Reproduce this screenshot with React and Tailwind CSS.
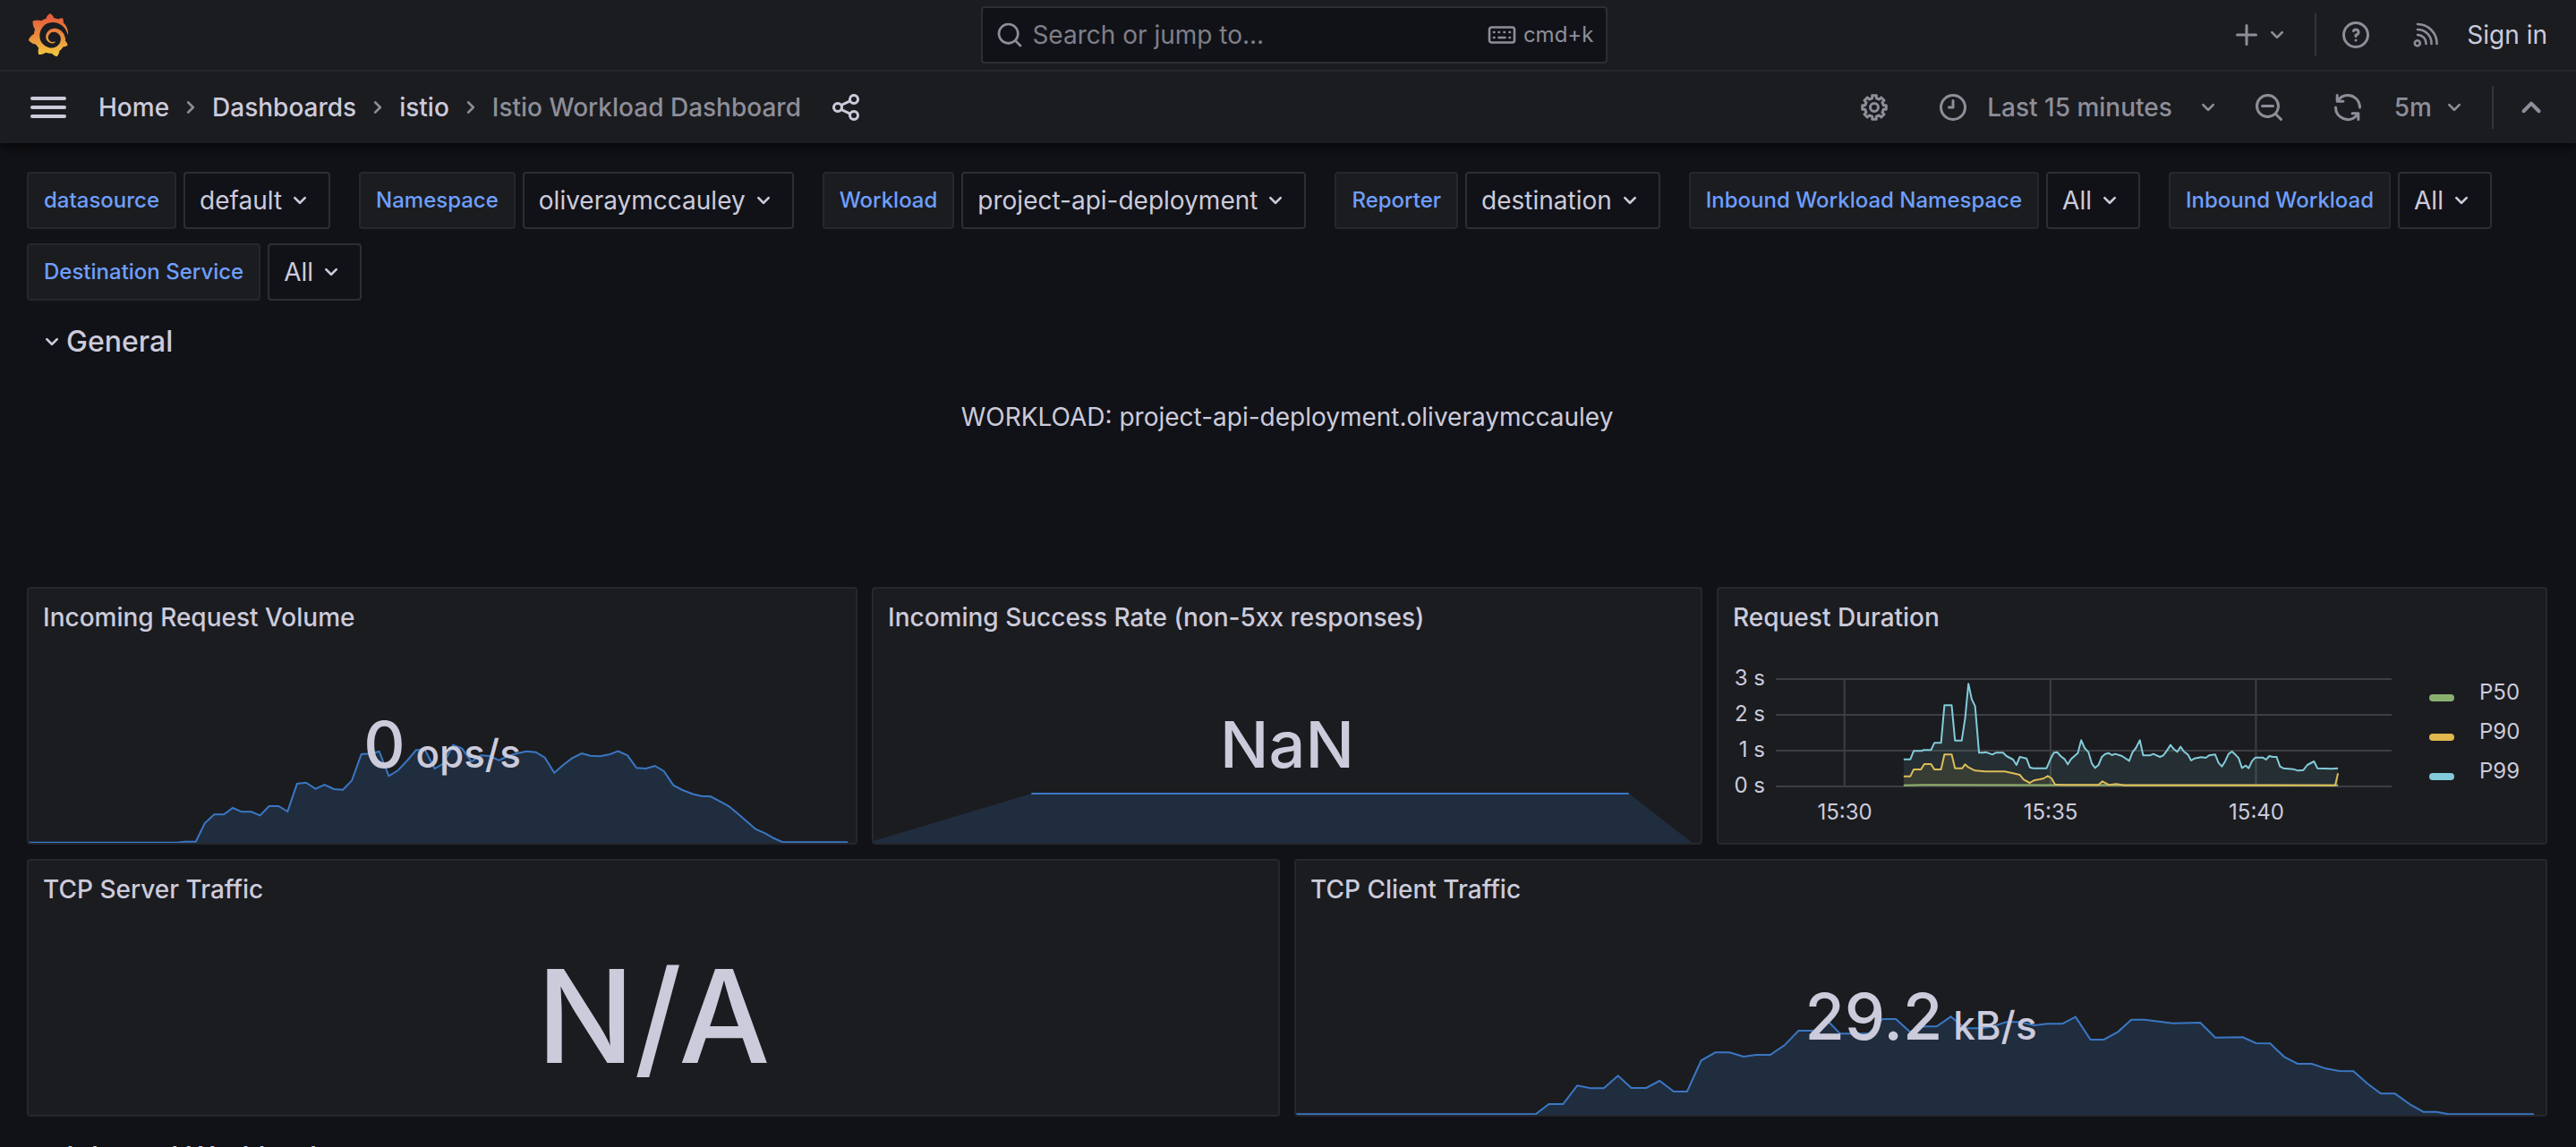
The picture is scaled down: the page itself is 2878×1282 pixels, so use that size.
import { SiGrafana } from "react-icons/si";

const ICONS = {
  plus: "M19,11H13V5a1,1,0,0,0-2,0v6H5a1,1,0,0,0,0,2h6v6a1,1,0,0,0,2,0V13h6a1,1,0,0,0,0-2Z",
  angleDown:
    "M17,9.17a1,1,0,0,0-1.41,0L12,12.71,8.46,9.17a1,1,0,0,0-1.41,0,1,1,0,0,0,0,1.42l4.24,4.24a1,1,0,0,0,1.42,0L17,10.59A1,1,0,0,0,17,9.17Z",
  angleUp:
    "M17,13.41,12.71,9.17a1,1,0,0,0-1.42,0L7.05,13.41a1,1,0,0,0,0,1.42,1,1,0,0,0,1.41,0L12,11.29l3.54,3.54a1,1,0,0,0,.7.29,1,1,0,0,0,.71-.29A1,1,0,0,0,17,13.41Z",
  angleRight:
    "M14.83,11.29,10.59,7.05a1,1,0,0,0-1.42,0,1,1,0,0,0,0,1.41L12.71,12,9.17,15.54a1,1,0,0,0,0,1.41,1,1,0,0,0,.71.29,1,1,0,0,0,.71-.29l4.24-4.24A1,1,0,0,0,14.83,11.29Z",
  search:
    "M21.71,20.29,18,16.61A9,9,0,1,0,16.61,18l3.68,3.68a1,1,0,0,0,1.42,0A1,1,0,0,0,21.71,20.29ZM11,18a7,7,0,1,1,7-7A7,7,0,0,1,11,18Z",
  searchMinus:
    "M21.71,20.29,18,16.61A9,9,0,1,0,16.61,18l3.68,3.68a1,1,0,0,0,1.42,0A1,1,0,0,0,21.71,20.29ZM11,18a7,7,0,1,1,7-7A7,7,0,0,1,11,18ZM15,10H7a1,1,0,0,0,0,2h8a1,1,0,0,0,0-2Z",
  question:
    "M11.29,15.29a1.58,1.58,0,0,0-.12.15.76.76,0,0,0-.09.18.64.64,0,0,0-.06.18,1.36,1.36,0,0,0,0,.2.84.84,0,0,0,.08.38.9.9,0,0,0,.54.54.94.94,0,0,0,.76,0,.9.9,0,0,0,.54-.54A1,1,0,0,0,13,16a1,1,0,0,0-.29-.71A1,1,0,0,0,11.29,15.29ZM12,2A10,10,0,1,0,22,12,10,10,0,0,0,12,2Zm0,18a8,8,0,1,1,8-8A8,8,0,0,1,12,20ZM12,7A3,3,0,0,0,9.4,8.5a1,1,0,1,0,1.73,1A1,1,0,0,1,12,9a1,1,0,0,1,0,2,1,1,0,0,0-1,1v1a1,1,0,0,0,2,0v-.18A3,3,0,0,0,12,7Z",
  clock:
    "M12,2A10,10,0,1,0,22,12,10,10,0,0,0,12,2Zm0,18a8,8,0,1,1,8-8A8,8,0,0,1,12,20ZM12,6a1,1,0,0,0-1,1v4H9a1,1,0,0,0,0,2h3a1,1,0,0,0,1-1V7A1,1,0,0,0,12,6Z",
  sync: "M19.91,15.51H15.38a1,1,0,0,0,0,2h2.4A8,8,0,0,1,4,12a1,1,0,0,0-2,0,10,10,0,0,0,16.88,7.23V21a1,1,0,0,0,2,0V16.5A1,1,0,0,0,19.91,15.51ZM12,2A10,10,0,0,0,5.12,4.77V3a1,1,0,0,0-2,0V7.5a1,1,0,0,0,1,1h4.5a1,1,0,0,0,0-2H6.22A8,8,0,0,1,20,12a1,1,0,0,0,2,0A10,10,0,0,0,12,2Z",
  share:
    "M18,14a4,4,0,0,0-3.08,1.48l-5.1-2.35a3.64,3.64,0,0,0,0-2.26l5.1-2.35A4,4,0,1,0,14,6a4.17,4.17,0,0,0,.07.71L8.79,9.14a4,4,0,1,0,0,5.72l5.28,2.43A4.17,4.17,0,0,0,14,18a4,4,0,1,0,4-4ZM18,4a2,2,0,1,1-2,2A2,2,0,0,1,18,4ZM6,14a2,2,0,1,1,2-2A2,2,0,0,1,6,14Zm12,6a2,2,0,1,1,2-2A2,2,0,0,1,18,20Z",
};

function Icon({ name, className = "size-9" }) {
  return (
    <svg viewBox="0 0 24 24" fill="currentColor" aria-hidden="true" className={`shrink-0 ${className}`}>
      <path d={ICONS[name]} />
    </svg>
  );
}

// Eight-toothed gear outline, built from the tooth angles.
const gearPoints = Array.from({ length: 8 }, (_, i) => {
  const at = (deg, r) => {
    const a = ((i * 45 + deg) * Math.PI) / 180;
    return `${(12 + r * Math.cos(a)).toFixed(2)},${(12 + r * Math.sin(a)).toFixed(2)}`;
  };
  return [at(-13, 7), at(-10, 9), at(10, 9), at(13, 7)].join(" ");
}).join(" ");

function GearIcon() {
  return (
    <svg viewBox="0 0 24 24" fill="none" stroke="currentColor" strokeWidth="2" strokeLinejoin="round" aria-hidden="true" className="size-9 shrink-0">
      <polygon points={gearPoints} />
      <circle cx="12" cy="12" r="3" />
    </svg>
  );
}

function RssIcon() {
  return (
    <svg viewBox="0 0 28 28" fill="none" stroke="currentColor" strokeWidth="2.6" strokeLinecap="round" aria-hidden="true" className="size-7 shrink-0">
      <circle cx="4.8" cy="23.2" r="3" />
      <path d="M5 2a21.5 21.5 0 0 1 21.5 22M5 8a15.5 15.5 0 0 1 15.5 16M5 14a9.5 9.5 0 0 1 9.5 10" />
    </svg>
  );
}

function KeyboardIcon() {
  return (
    <svg viewBox="0 0 32 20" fill="none" stroke="currentColor" strokeWidth="2.6" strokeLinecap="round" aria-hidden="true" className="h-5 w-8 shrink-0">
      <rect x="2" y="1.5" width="28" height="17" rx="2.5" />
      <path d="M7 7h.5M12.5 7h.5M18.5 7h.5M24.5 7h.5M7 13h.5M12.5 13h7M24.5 13h.5" />
    </svg>
  );
}

const VARIABLES = [
  ["datasource", "default"],
  ["Namespace", "oliveraymccauley"],
  ["Workload", "project-api-deployment"],
  ["Reporter", "destination"],
  ["Inbound Workload Namespace", "All"],
  ["Inbound Workload", "All"],
  ["Destination Service", "All"],
];

function Variable({ label, value }) {
  const id = label.toLowerCase().replaceAll(" ", "-");
  return (
    <div className="flex gap-2">
      <label htmlFor={id} className="flex h-16 items-center rounded border-2 border-[#26272c] bg-[#1b1c20] px-[17px] text-2xl font-medium text-[#6e9fff]">
        {label}
      </label>
      <button id={id} type="button" className="flex h-16 items-center gap-1 rounded border-2 border-[#2d2e33] bg-[#111217] px-4">
        {value}
        <Icon name="angleDown" className="size-8" />
      </button>
    </div>
  );
}

function Crumb({ children }) {
  return (
    <li className="flex items-center gap-2">
      <a href="#">{children}</a>
      <Icon name="angleRight" className="size-8 text-[#8e8e99]" />
    </li>
  );
}

function Section({ children }) {
  return (
    <h2 className="h-[60px] px-3">
      <button type="button" className="flex h-full items-center text-[32px] font-medium">
        <Icon name="angleDown" className="size-8" />
        {children}
      </button>
    </h2>
  );
}

function Panel({ title, children }) {
  return (
    <section className="relative flex h-72 flex-col overflow-hidden rounded border-2 border-[#26272c] bg-[#1b1c20]">
      <h3 className="relative z-10 flex h-16 shrink-0 items-center px-4 font-medium">{title}</h3>
      {children}
    </section>
  );
}

function Sparkline({ box, base, points, line = points }) {
  const [x, , w] = box.split(" ").map(Number);
  const last = points.trim().split(" ").pop().split(",")[0];
  return (
    <svg viewBox={box} preserveAspectRatio="none" aria-hidden="true" className="absolute inset-0 size-full">
      <polygon points={`${x},${base} ${points} ${Math.min(Number(last), x + w)},${base}`} fill="#202d3e" />
      <polyline points={line} fill="none" stroke="#3a77c4" strokeWidth="2" vectorEffect="non-scaling-stroke" />
    </svg>
  );
}

function Stat({ value, unit }) {
  return (
    <div className="relative flex flex-1 items-center justify-center">
      <p className="text-7xl leading-none font-medium whitespace-pre">
        {value}
        {unit && <span className="text-[44px]"> {unit}</span>}
      </p>
    </div>
  );
}

const REQUESTS =
  "51,905 318,905 330,902 350,902 366,840 383,811 400,811 416,789 432,802 449,802 465,814 481,783 498,783 514,801 531,708 547,704 564,725 580,711 597,726 613,728 629,697 646,609 662,607 678,600 695,682 711,664 728,630 744,595 760,595 777,657 793,640 810,578 826,590 843,634 859,613 876,615 892,630 908,615 925,606 941,599 958,602 974,620 991,671 1007,645 1023,622 1040,606 1056,614 1073,616 1089,610 1105,599 1122,613 1138,655 1155,657 1171,648 1187,666 1204,713 1220,729 1240,743 1254,749 1271,751 1287,767 1303,783 1319,808 1351,860 1368,874 1384,891 1400,904 1516,904";

const CLIENT_TRAFFIC =
  "30,916 318,916 334,882 351,882 368,820 384,829 400,829 417,787 433,828 451,828 467,804 484,840 500,840 517,736 534,709 551,709 568,723 583,717 600,717 617,685 634,636 655,636 668,600 684,646 718,646 735,597 751,597 768,640 785,622 800,622 817,589 834,628 855,628 867,622 884,607 900,607 917,618 933,613 951,613 967,590 985,666 1001,666 1018,640 1034,599 1050,599 1084,611 1117,609 1135,659 1168,658 1184,678 1201,679 1218,724 1234,747 1251,747 1268,763 1284,771 1301,772 1318,814 1334,847 1351,847 1370,885 1385,908 1401,908 1415,916 1518,916";

const P99 =
  "364,626 376,626 382,598 397,598 399,595 413,595 419,571 431,571 437,445 450,445 456,563 468,563 474,490 480,373 486,425 492,448 499,604 507,604 511,602 523,610 529,604 542,604 548,615 560,627 566,645 572,618 584,623 590,653 596,656 620,656 627,625 633,604 639,602 645,615 652,625 658,643 664,625 670,615 676,605 682,562 688,588 695,602 701,640 707,655 713,645 719,618 725,608 731,605 737,612 743,608 755,615 768,631 774,602 780,588 787,562 793,613 805,613 811,608 823,618 829,613 835,598 842,578 848,592 854,601 860,584 866,600 873,610 879,630 885,623 897,619 905,621 911,613 922,610 928,638 934,650 940,632 946,608 952,600 958,610 964,622 970,655 977,647 982,656 988,632 994,620 1007,620 1013,627 1019,615 1025,618 1032,618 1038,650 1044,656 1062,659 1070,664 1080,662 1087,645 1099,633 1105,656 1130,658 1142,656";

const P90 =
  "364,683 376,683 382,660 395,660 401,642 413,642 419,660 431,660 437,610 450,610 456,656 469,656 474,643 480,653 492,664 511,667 545,667 560,673 572,678 579,694 590,705 597,697 608,693 615,690 622,682 629,690 635,710 650,712 713,712 720,700 732,712 745,709 760,713 1137,713 1142,673";

const P50 = "364,713 400,712 1142,713";

const SERIES = [
  { points: P99, color: "#83cbda" },
  { points: P50, color: "#8ab06f" },
  { points: P90, color: "#dcbc58" },
];

function DurationChart() {
  return (
    <div className="flex flex-1 pt-4 pl-4 text-2xl">
      <div className="flex-1">
        <div className="flex">
          <ul className="w-12 shrink-0 pr-3 text-right whitespace-nowrap">
            {["3 s", "2 s", "1 s", "0 s"].map((t) => (
              <li key={t} className="h-10 leading-10">{t}</li>
            ))}
          </ul>
          <div className="flex-1 pt-5">
            <svg viewBox="135 354 1103 366" preserveAspectRatio="none" role="img" aria-label="Request duration" className="h-[122px] w-full">
              <g stroke="#3d3e42" strokeWidth="2">
                {[357, 477, 597, 717].map((y) => (
                  <path key={y} d={`M135 ${y}H1238`} vectorEffect="non-scaling-stroke" />
                ))}
                {[258, 627, 995].map((x) => (
                  <path key={x} d={`M${x} 354V714`} vectorEffect="non-scaling-stroke" />
                ))}
              </g>
              {SERIES.map(({ points, color }) => (
                <g key={color}>
                  <polygon points={`364,717 ${points} 1142,717`} fill={color} fillOpacity="0.1" />
                  <polyline points={points} fill="none" stroke={color} strokeWidth="2" strokeLinejoin="round" vectorEffect="non-scaling-stroke" />
                </g>
              ))}
            </svg>
          </div>
        </div>
        <ul className="grid grid-cols-3 pr-9 pl-[10px] text-center leading-5">
          {["15:30", "15:35", "15:40"].map((t) => (
            <li key={t}>{t}</li>
          ))}
        </ul>
      </div>
      <ul className="flex w-[172px] shrink-0 flex-col gap-5 pt-6 pl-[42px] leading-6">
        {[
          ["P50", "bg-[#8ab06f]"],
          ["P90", "bg-[#e0b84f]"],
          ["P99", "bg-[#83cbda]"],
        ].map(([name, swatch]) => (
          <li key={name} className="flex items-end gap-7">
            <span className={`mb-0.5 h-2 w-7 rounded ${swatch}`} />
            {name}
          </li>
        ))}
      </ul>
    </div>
  );
}

export default function App() {
  return (
    <div className="h-screen overflow-hidden bg-[#111217] font-['Inter',sans-serif] text-[28px] leading-[44px] text-[#cccbdb]">
      <header className="relative bg-[#1b1c20] shadow-[0_2px_16px_rgba(0,0,0,0.9)]">
        <div className="grid h-20 grid-cols-[127fr_700px_125fr] items-center border-b-2 border-[#26272c] pr-8 pl-[30px]">
          <a href="#" aria-label="Grafana">
            <svg className="absolute size-0" aria-hidden="true">
              <linearGradient id="logo" x1="0" y1="0" x2="0" y2="1">
                <stop offset="0.1" stopColor="#e5603a" />
                <stop offset="0.55" stopColor="#ea8f3d" />
                <stop offset="1" stopColor="#f3cb3f" />
              </linearGradient>
            </svg>
            <SiGrafana fill="url(#logo)" className="size-12" />
          </a>
          <div className="flex h-16 items-center rounded border-2 border-[#2d2e33] bg-[#111217] px-[14px] text-[#8e8e99]">
            <Icon name="search" className="size-8" />
            <input
              type="text"
              aria-label="Search"
              placeholder="Search or jump to..."
              className="min-w-0 flex-1 bg-transparent pl-[9px] outline-none placeholder:text-[#7f7f89]"
            />
            <KeyboardIcon />
            <span className="pl-2 text-2xl">cmd+k</span>
          </div>
          <div className="flex items-center justify-end text-[#8e8e99]">
            <button type="button" aria-label="New" className="flex items-center">
              <Icon name="plus" />
              <Icon name="angleDown" className="size-8" />
            </button>
            <span className="mx-[26px] h-12 w-[2px] bg-[#34353a]" />
            <button type="button" aria-label="Help">
              <Icon name="question" />
            </button>
            <button type="button" aria-label="News" className="ml-[46px]">
              <RssIcon />
            </button>
            <a href="#" className="ml-8 text-[#cccbdb]">Sign in</a>
          </div>
        </div>
        <div className="flex h-20 items-center justify-between pr-[26px] pl-[34px]">
          <div className="flex items-center">
            <button type="button" aria-label="Toggle menu" className="flex w-10 flex-col gap-[6px]">
              <span className="h-1 rounded-full bg-[#cccbdb]" />
              <span className="h-1 rounded-full bg-[#cccbdb]" />
              <span className="h-1 rounded-full bg-[#cccbdb]" />
            </button>
            <nav aria-label="Breadcrumbs" className="pl-9">
              <ol className="flex items-center gap-2 font-medium">
                <Crumb>Home</Crumb>
                <Crumb>Dashboards</Crumb>
                <Crumb>istio</Crumb>
                <li className="text-[#8e8e99]">Istio Workload Dashboard</li>
              </ol>
            </nav>
            <button type="button" aria-label="Share" className="ml-8">
              <Icon name="share" />
            </button>
          </div>
          <div className="flex items-center font-medium text-[#8e8e99]">
            <button type="button" aria-label="Settings">
              <GearIcon />
            </button>
            <button type="button" className="ml-[52px] flex items-center">
              <Icon name="clock" />
              <span className="pr-6 pl-5">Last 15 minutes</span>
              <Icon name="angleDown" className="size-8" />
            </button>
            <button type="button" aria-label="Zoom out" className="ml-[34px]">
              <Icon name="searchMinus" />
            </button>
            <button type="button" aria-label="Refresh" className="ml-[52px]">
              <Icon name="sync" />
            </button>
            <button type="button" className="ml-[34px] flex items-center gap-[9px]">
              5m
              <Icon name="angleDown" className="size-8" />
            </button>
            <span className="mr-[18px] ml-[26px] h-12 w-[2px] bg-[#34353a]" />
            <button type="button" aria-label="Collapse toolbar">
              <Icon name="angleUp" className="size-12" />
            </button>
          </div>
        </div>
      </header>

      <main className="flex flex-col gap-4 pt-8 pr-8 pl-[30px]">
        <div className="flex flex-wrap gap-x-8 gap-y-4">
          {VARIABLES.map(([label, value]) => (
            <Variable key={label} label={label} value={value} />
          ))}
        </div>

        <Section>General</Section>

        <p className="h-[212px] pt-4 text-center">WORKLOAD: project-api-deployment.oliveraymccauley</p>

        <div className="grid grid-cols-3 gap-4">
          <Panel title="Incoming Request Volume">
            <Sparkline box="51 54 1479 852" base="906" points={REQUESTS} />
            <Stat value="0" unit="ops/s" />
          </Panel>
          <Panel title="Incoming Success Rate (non-5xx responses)">
            <Sparkline box="26 54 1510 852" base="906" points="26,900 314,741 1405,741 1521,906" line="314,741 1405,741" />
            <Stat value="NaN" />
          </Panel>
          <Panel title="Request Duration">
            <DurationChart />
          </Panel>
        </div>

        <div className="grid grid-cols-2 gap-4">
          <Panel title="TCP Server Traffic">
            <div className="flex flex-1 items-center justify-center">
              <p className="text-[144px] leading-none font-medium">N/A</p>
            </div>
          </Panel>
          <Panel title="TCP Client Traffic">
            <Sparkline box="30 66 1502 852" base="918" points={CLIENT_TRAFFIC} />
            <Stat value="29.2" unit="kB/s" />
          </Panel>
        </div>

        <Section>Inbound Workloads</Section>
      </main>
    </div>
  );
}
